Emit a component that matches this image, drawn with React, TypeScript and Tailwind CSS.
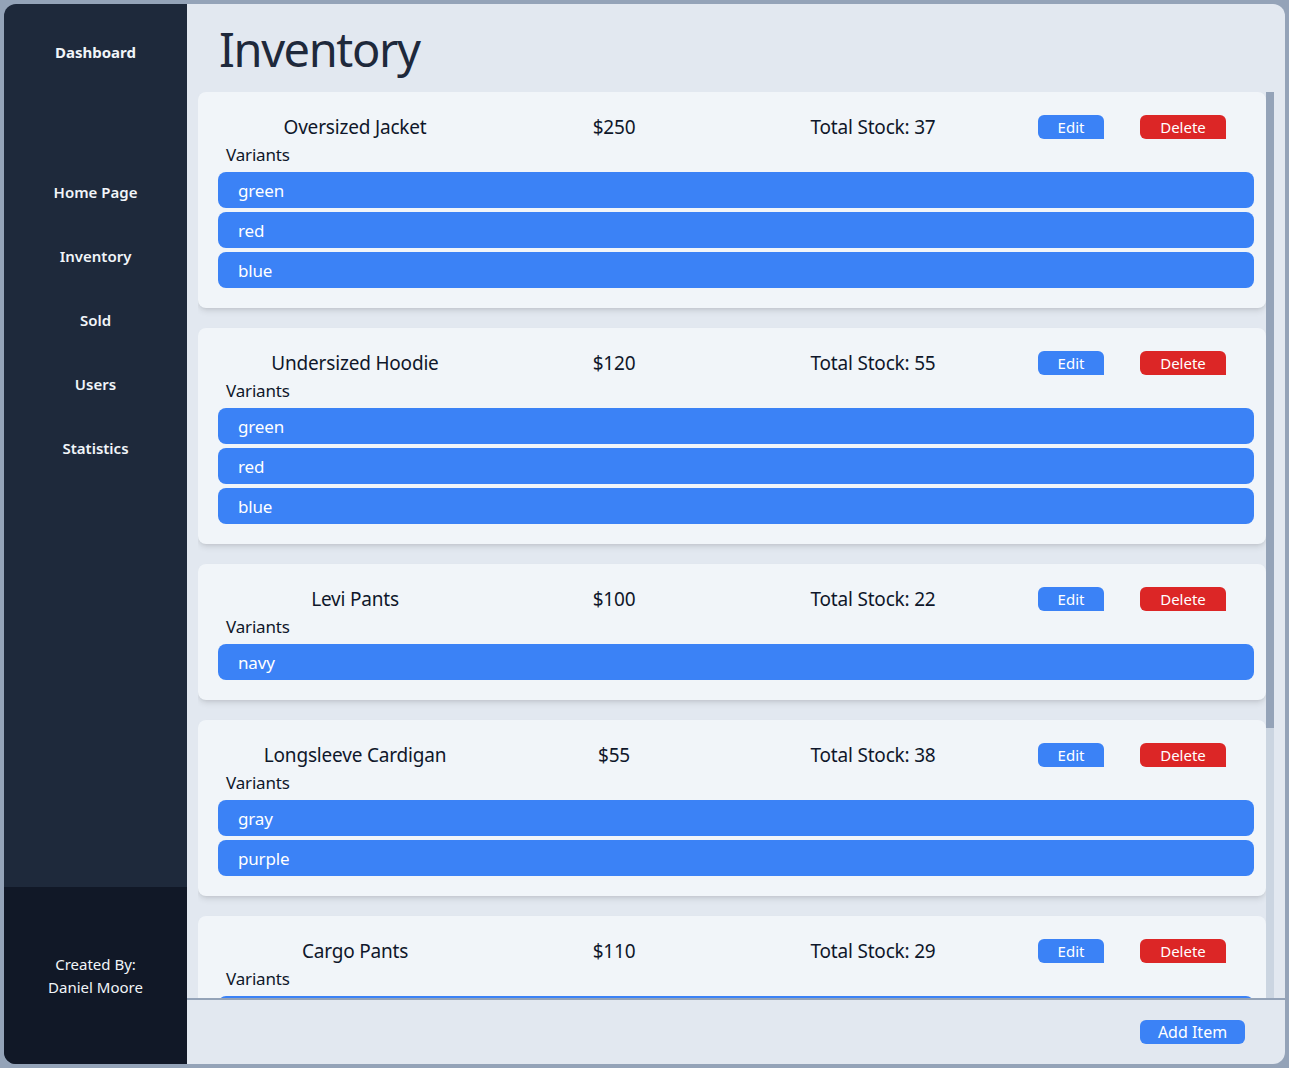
import React from "react";

type Item = { name: string; price: string; stock: number; variants: string[] };

const items: Item[] = [
  { name: "Oversized Jacket", price: "$250", stock: 37, variants: ["green", "red", "blue"] },
  { name: "Undersized Hoodie", price: "$120", stock: 55, variants: ["green", "red", "blue"] },
  { name: "Levi Pants", price: "$100", stock: 22, variants: ["navy"] },
  { name: "Longsleeve Cardigan", price: "$55", stock: 38, variants: ["gray", "purple"] },
  { name: "Cargo Pants", price: "$110", stock: 29, variants: ["green"] },
];

const font = { fontFamily: '"Noto Sans", "Open Sans", sans-serif' };

function Card({ item }: { item: Item }) {
  return (
    <div className="shrink-0 bg-[#f1f5f9] rounded-lg shadow-md pt-[21px] pb-5 pl-5 pr-3 text-[#0f172a]">
      <div className="flex items-center h-[28px] text-[19px] tracking-[-0.01em]">
        <div className="w-[274px] text-center">{item.name}</div>
        <div className="w-[244px] text-center">{item.price}</div>
        <div className="w-[274px] text-center">Total Stock: {item.stock}</div>
        <button className="ml-[28px] w-[66px] h-[24px] bg-[#3b82f6] text-white text-[15px] leading-[24px] tracking-normal rounded-md rounded-br-none">
          Edit
        </button>
        <button className="ml-[36px] w-[86px] h-[24px] bg-[#dc2626] text-white text-[15px] leading-[24px] tracking-normal rounded-md rounded-br-none">
          Delete
        </button>
      </div>
      <div className="pl-2 pt-[1px] text-[17px] leading-[26px] mb-[4px] tracking-[-0.01em]">Variants</div>
      <div className="flex flex-col gap-1">
        {item.variants.map((v, i) => (
          <div
            key={i}
            className="h-[36px] bg-[#3b82f6] rounded-lg px-5 pt-[1px] flex items-center text-white text-[17px] tracking-[-0.01em]"
          >
            {v}
          </div>
        ))}
      </div>
    </div>
  );
}

export default function App() {
  return (
    <div className="h-screen w-full bg-[#94a3b8] p-1" style={font}>
      <div className="h-full w-full rounded-xl overflow-hidden flex">
        <aside className="w-[183px] shrink-0 flex flex-col bg-[#1e293b] text-[#f1f5f9]">
          <div className="flex-1 flex flex-col items-center">
            <div className="pt-[38px] text-[15px] leading-[20px] font-bold">Dashboard</div>
            <nav className="mt-[120px] flex flex-col items-center gap-[44px] text-[15px] leading-[20px] font-semibold">
              <div>Home Page</div>
              <div>Inventory</div>
              <div>Sold</div>
              <div>Users</div>
              <div>Statistics</div>
            </nav>
          </div>
          <div className="h-[177px] bg-[#111827] flex flex-col items-center justify-center text-[15px] leading-[23px] text-[#f1f5f9]">
            <div>Created By:</div>
            <div>Daniel Moore</div>
          </div>
        </aside>
        <main className="flex-1 min-w-0 flex flex-col bg-[#e2e8f0]">
          <div className="h-[88px] shrink-0 flex items-center pl-[32px]">
            <h1 className="text-[47px] leading-none text-[#1e293b] font-normal tracking-[-0.03em] pt-[2px]">
              Inventory
            </h1>
          </div>
          <div className="flex-1 min-h-0 flex pl-[11px] pr-[11px]">
            <div className="flex-1 min-w-0 h-full overflow-hidden flex flex-col gap-5">
              {items.map((it, i) => (
                <Card key={i} item={it} />
              ))}
            </div>
            <div className="w-[8px] shrink-0 flex flex-col">
              <div className="h-[636px] bg-[#94a3b8]" />
              <div className="flex-1 bg-[#cbd5e1]" />
            </div>
          </div>
          <div className="h-[66px] shrink-0 border-t-2 border-[#94a3b8] flex items-start justify-end pr-[40px] pt-[20px]">
            <button className="w-[105px] h-[24px] rounded-md bg-[#3b82f6] text-white text-[16px] leading-[24px]">
              Add Item
            </button>
          </div>
        </main>
      </div>
    </div>
  );
}
